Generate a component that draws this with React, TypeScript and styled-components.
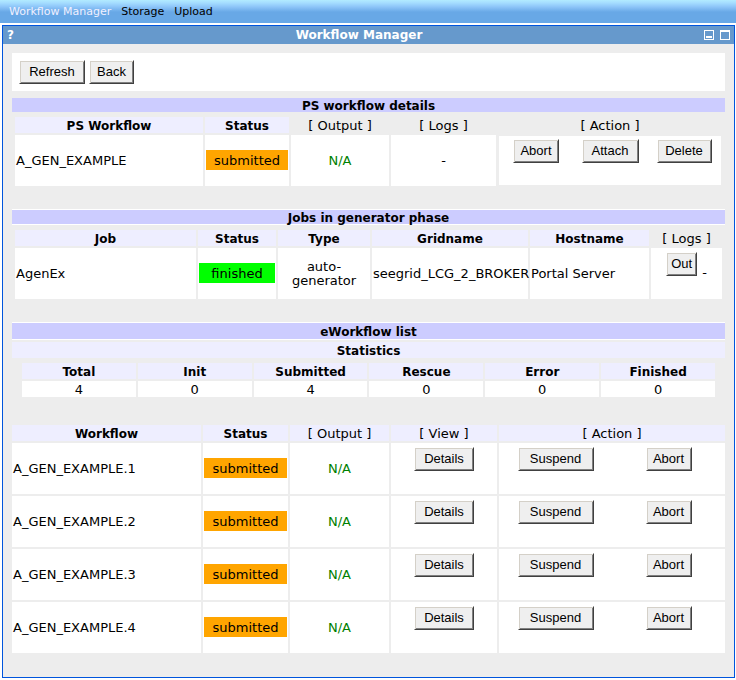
import React from "react";
import styled, { createGlobalStyle, css } from "styled-components";

const GlobalStyle = createGlobalStyle`
  *, *::before, *::after { box-sizing: border-box; }
  body {
    margin: 0;
    background: #fff;
    color: #000;
    font-family: Verdana, "DejaVu Sans", sans-serif;
    font-size: 13px;
    line-height: 14px;
  }
`;

const TabBar = styled.nav`
  display: flex;
  align-items: center;
  gap: 10px;
  height: 23px;
  padding: 0 9px;
  background: linear-gradient(#b2ebff 0, #a4dcff 3px, #8cc4f8 7px, #68a8e6 12px);
  font-size: 11px;
`;

const Tab = styled.a<{ $active?: boolean }>`
  color: ${(p) => (p.$active ? "#f0f0ff" : "#000")};
  text-decoration: none;
`;

const Window = styled.main`
  margin: 2px 1px 2px 2px;
  border: 1px solid #0055dd;
  background: #ededed;
`;

const TitleBar = styled.header`
  display: grid;
  grid-template-columns: auto 1fr auto;
  align-items: center;
  height: 18px;
  padding: 0 4px;
  background: #6699cc;
  color: #fff;
`;

const Title = styled.h1`
  margin: 0;
  font-size: 12px;
  line-height: 14px;
  text-align: center;
`;

const IconButton = styled.button`
  display: block;
  padding: 0;
  border: 0;
  background: none;
  color: inherit;
  font: bold 12px/14px Verdana, "DejaVu Sans", sans-serif;
`;

const WindowControls = styled.div`
  display: flex;
  justify-content: flex-end;
  gap: 6px;
`;

const Body = styled.div`
  padding: 9px 9px 22px;
`;

const Toolbar = styled.div`
  display: flex;
  gap: 4px;
  padding: 7px;
  background: #fff;
`;

const Button = styled.button<{ $width: number }>`
  width: ${(p) => p.$width}px;
  height: 24px;
  padding: 0 0 1px;
  border: 1px solid;
  border-color: #fff #404040 #404040 #fff;
  border-radius: 0;
  box-shadow: inset 1px 1px #d4d0c8, inset -1px -1px #808080;
  background: #efefef;
  color: #000;
  font: 13px/18px "Liberation Sans", Arial, sans-serif;
`;

const Section = styled.section<{ $gap: number }>`
  margin-top: ${(p) => p.$gap}px;
`;

const SectionTitle = styled.h2<{ $ruled?: boolean; $tall?: boolean }>`
  margin: 0;
  padding-top: 2px;
  background: #ccccff;
  font-size: 12px;
  line-height: ${(p) => (p.$tall ? 14 : 12)}px;
  text-align: center;
  ${(p) => p.$ruled && css`
    border: solid #fff;
    border-width: 1px 0;
  `}
`;

const SubTitle = styled.h3`
  margin: 2px 0 0;
  padding-top: 2px;
  background: #eeeeff;
  font-size: 12px;
  line-height: 14px;
  text-align: center;
`;

const TableFrame = styled.div<{ $inset: number; $gap?: number }>`
  margin: ${(p) => p.$gap ?? 3}px ${(p) => p.$inset}px 0;
`;

const Table = styled.table`
  width: 100%;
  table-layout: fixed;
  border-collapse: separate;
  border-spacing: 2px;
`;

const Col = styled.col<{ $width?: number }>`
  width: ${(p) => (p.$width ? `${p.$width}px` : "auto")};
`;

const Head = styled.th<{ $light?: boolean; $clear?: boolean }>`
  height: 16px;
  padding: 2px 0 0;
  background: ${(p) => (p.$clear ? "transparent" : "#eeeeff")};
  font-size: ${(p) => (p.$light ? 13 : 12)}px;
  font-weight: ${(p) => (p.$light ? "normal" : "bold")};
`;

const Cell = styled.td<{ $align?: string; $top?: boolean; $clear?: boolean }>`
  height: 51px;
  padding: ${(p) => (p.$top ? "4px 0 0" : "1px")};
  background: ${(p) => (p.$clear ? "transparent" : "#fff")};
  text-align: ${(p) => p.$align ?? "center"};
  vertical-align: ${(p) => (p.$top ? "top" : "middle")};
`;

const StatusCell = styled(Cell)`
  padding-bottom: 2px;
`;

const CountCell = styled.td`
  height: 16px;
  padding: 2px 0 0;
  background: #fff;
  text-align: center;
`;

const Badge = styled.div<{ $color: string }>`
  height: 20px;
  background: ${(p) => p.$color};
  line-height: 22px;
`;

const Unavailable = styled.span`
  color: #008000;
`;

const Actions = styled.div<{ $columns: number }>`
  display: grid;
  grid-template-columns: repeat(${(p) => p.$columns}, 1fr);
  justify-items: center;
`;

const ActionPanel = styled.div`
  height: 49px;
  padding-top: 3px;
  background: #fff;
`;

const LogLinks = styled.div`
  display: flex;
  justify-content: center;
  gap: 5px;
`;

const LogMark = styled.span`
  line-height: 42px;
`;

const stats: [string, number][] = [
  ["Total", 4], ["Init", 0], ["Submitted", 4], ["Rescue", 0], ["Error", 0], ["Finished", 0],
];
const workflows = [1, 2, 3, 4].map((n) => `A_GEN_EXAMPLE.${n}`);

export default function App() {
  return (
    <>
      <GlobalStyle />
      <TabBar>
        <Tab href="#workflow" $active>Workflow Manager</Tab>
        <Tab href="#storage">Storage</Tab>
        <Tab href="#upload">Upload</Tab>
      </TabBar>
      <Window>
        <TitleBar>
          <IconButton aria-label="Help">?</IconButton>
          <Title>Workflow Manager</Title>
          <WindowControls>
            <IconButton aria-label="Minimize">
              <svg width="10" height="10" display="block" shapeRendering="crispEdges">
                <path d="M0 0h10v10H0zM1 1v8h8V1z" fill="#fff" fillRule="evenodd" />
                <path d="M2 6h6v2H2z" fill="#fff" />
              </svg>
            </IconButton>
            <IconButton aria-label="Maximize">
              <svg width="10" height="10" display="block" shapeRendering="crispEdges">
                <path d="M0 0h10v10H0zM1 2v7h8V2z" fill="#fff" fillRule="evenodd" />
              </svg>
            </IconButton>
          </WindowControls>
        </TitleBar>
        <Body>
          <Toolbar>
            <Button $width={66}>Refresh</Button>
            <Button $width={45}>Back</Button>
          </Toolbar>

          <Section $gap={7}>
            <SectionTitle>PS workflow details</SectionTitle>
            <TableFrame $inset={1}>
              <Table>
                <colgroup>
                  <Col /><Col $width={84} /><Col $width={98} /><Col $width={105} /><Col $width={224} />
                </colgroup>
                <thead>
                  <tr>
                    <Head>PS Workflow</Head>
                    <Head>Status</Head>
                    <Head $light $clear>[ Output ]</Head>
                    <Head $light $clear>[ Logs ]</Head>
                    <Head $light $clear>[ Action ]</Head>
                  </tr>
                </thead>
                <tbody>
                  <tr>
                    <Cell $align="left">A_GEN_EXAMPLE</Cell>
                    <StatusCell><Badge $color="#ffa500">submitted</Badge></StatusCell>
                    <Cell><Unavailable>N/A</Unavailable></Cell>
                    <Cell>-</Cell>
                    <Cell $clear>
                      <ActionPanel>
                        <Actions $columns={3}>
                          <Button $width={46}>Abort</Button>
                          <Button $width={57}>Attach</Button>
                          <Button $width={55}>Delete</Button>
                        </Actions>
                      </ActionPanel>
                    </Cell>
                  </tr>
                </tbody>
              </Table>
            </TableFrame>
          </Section>

          <Section $gap={21}>
            <SectionTitle $ruled>Jobs in generator phase</SectionTitle>
            <TableFrame $inset={1}>
              <Table>
                <colgroup>
                  <Col /><Col $width={78} /><Col $width={92} /><Col $width={156} /><Col $width={119} /><Col $width={71} />
                </colgroup>
                <thead>
                  <tr>
                    <Head>Job</Head>
                    <Head>Status</Head>
                    <Head>Type</Head>
                    <Head>Gridname</Head>
                    <Head>Hostname</Head>
                    <Head $light $clear>[ Logs ]</Head>
                  </tr>
                </thead>
                <tbody>
                  <tr>
                    <Cell $align="left">AgenEx</Cell>
                    <StatusCell><Badge $color="#00ff00">finished</Badge></StatusCell>
                    <Cell>auto-generator</Cell>
                    <Cell $align="left">seegrid_LCG_2_BROKER</Cell>
                    <Cell $align="left">Portal Server</Cell>
                    <Cell $top>
                      <LogLinks>
                        <Button $width={31}>Out</Button>
                        <LogMark>-</LogMark>
                      </LogLinks>
                    </Cell>
                  </tr>
                </tbody>
              </Table>
            </TableFrame>
          </Section>

          <Section $gap={21}>
            <SectionTitle $ruled $tall>eWorkflow list</SectionTitle>
            <SubTitle>Statistics</SubTitle>
            <TableFrame $inset={8}>
              <Table>
                <thead>
                  <tr>{stats.map(([name]) => <Head key={name}>{name}</Head>)}</tr>
                </thead>
                <tbody>
                  <tr>{stats.map(([name, count]) => <CountCell key={name}>{count}</CountCell>)}</tr>
                </tbody>
              </Table>
            </TableFrame>
            <TableFrame $inset={-2} $gap={24}>
              <Table>
                <colgroup>
                  <Col /><Col $width={85} /><Col $width={99} /><Col $width={106} /><Col $width={226} />
                </colgroup>
                <thead>
                  <tr>
                    <Head>Workflow</Head>
                    <Head>Status</Head>
                    <Head $light>[ Output ]</Head>
                    <Head $light>[ View ]</Head>
                    <Head $light>[ Action ]</Head>
                  </tr>
                </thead>
                <tbody>
                  {workflows.map((name) => (
                    <tr key={name}>
                      <Cell $align="left">{name}</Cell>
                      <StatusCell><Badge $color="#ffa500">submitted</Badge></StatusCell>
                      <Cell><Unavailable>N/A</Unavailable></Cell>
                      <Cell $top><Button $width={60}>Details</Button></Cell>
                      <Cell $top>
                        <Actions $columns={2}>
                          <Button $width={76}>Suspend</Button>
                          <Button $width={46}>Abort</Button>
                        </Actions>
                      </Cell>
                    </tr>
                  ))}
                </tbody>
              </Table>
            </TableFrame>
          </Section>
        </Body>
      </Window>
    </>
  );
}
